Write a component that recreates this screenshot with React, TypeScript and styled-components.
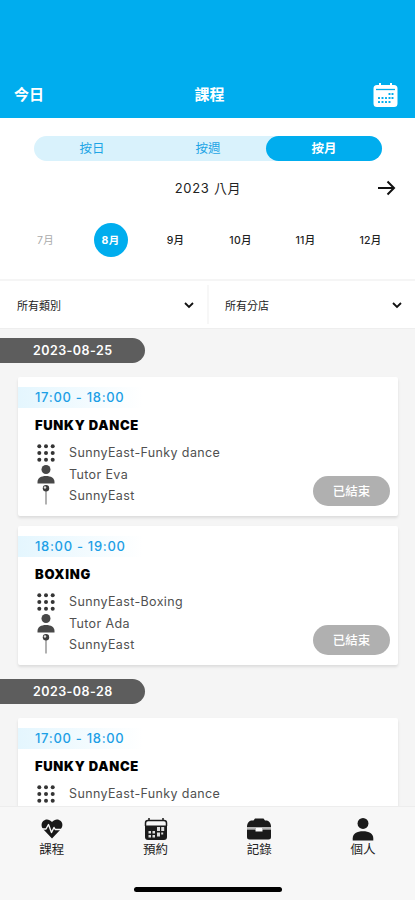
import React from "react";
import styled, { createGlobalStyle } from "styled-components";

const GlobalStyle = createGlobalStyle`
  * { box-sizing: border-box; }
  body { margin: 0; background: #f5f5f5; font-family: Inter, "Noto Sans CJK TC", sans-serif; }
  button { border: 0; padding: 0; background: none; font: inherit; color: inherit; }
  svg { display: block; flex: none; }
`;

const Screen = styled.div`
  width: 415px;
  height: 900px;
  display: flex;
  flex-direction: column;
  overflow: hidden;
  background: #f5f5f5;
  color: #222;
`;

const Header = styled.header`
  height: 118px;
  flex: none;
  padding: 70px 17px 0 14px;
  display: grid;
  grid-template-columns: 60px 1fr 57px;
  align-items: center;
  background: #00adee;
  color: #fff;
  font-size: 15px;
  font-weight: 700;
`;

const HeaderButton = styled.button`
  display: flex;
  justify-content: flex-start;
  padding-bottom: 1px;
  &:last-child { justify-content: flex-end; padding-bottom: 0; padding-top: 2px; }
`;

const HeaderTitle = styled.div`
  text-align: center;
  padding: 0 0 1px 4px;
`;

const Picker = styled.section`
  height: 163px;
  flex: none;
  padding-top: 18px;
  background: #fff;
  border-bottom: 2px solid #f5f5f5;
`;

const Segments = styled.div`
  display: grid;
  grid-template-columns: repeat(3, 1fr);
  width: 348px;
  height: 25px;
  margin-left: 34px;
  border-radius: 13px;
  background: #d9f2fc;
`;

const Segment = styled.button<{ $active?: boolean }>`
  border-radius: 13px;
  font-size: 12.5px;
  line-height: 25px;
  font-weight: ${(p) => (p.$active ? 700 : 400)};
  color: ${(p) => (p.$active ? "#fff" : "#1da5e6")};
  background: ${(p) => (p.$active ? "#00adee" : "transparent")};
`;

const MonthTitle = styled.div`
  display: grid;
  grid-template-columns: 1fr auto 1fr;
  align-items: center;
  height: 24px;
  margin-top: 14px;
  padding-right: 19px;
  padding-left: 20px;
  font-size: 13px;
  letter-spacing: 0.7px;
  svg { justify-self: end; margin-top: 2px; }
`;

const Months = styled.div`
  display: grid;
  grid-template-columns: repeat(6, 65px);
  justify-items: center;
  margin: 24px 0 0 13px;
`;

const Month = styled.button<{ $state?: "past" | "active" }>`
  width: 34px;
  height: 34px;
  padding-bottom: 2px;
  border-radius: 50%;
  font-size: 10.5px;
  letter-spacing: 0.3px;
  white-space: nowrap;
  font-weight: ${(p) => (p.$state === "active" ? 700 : p.$state === "past" ? 400 : 500)};
  color: ${(p) => (p.$state === "active" ? "#fff" : p.$state === "past" ? "#aaa" : "#222")};
  background: ${(p) => (p.$state === "active" ? "#00adee" : "transparent")};
`;

const Filters = styled.div`
  display: grid;
  grid-template-columns: 209px 1fr;
  height: 48px;
  flex: none;
  background: #fff;
  border-bottom: 1px solid #eee;
`;

const Filter = styled.button`
  display: flex;
  align-items: center;
  justify-content: space-between;
  margin: 4px 0;
  padding: 0 13px 0 17px;
  font-size: 11px;
  &:first-child { border-right: 2px solid #f7f7f7; }
  &:last-child { padding: 0 13px 0 16px; }
  svg { margin-top: 2px; }
`;

const Schedule = styled.main`
  flex: 1;
  min-height: 0;
  overflow: hidden;
  padding-top: 9px;
`;

const Day = styled.section`
  margin-bottom: 14px;
`;

const DayLabel = styled.h2`
  width: 145px;
  height: 25px;
  margin: 0 0 14px;
  padding-left: 33px;
  border-radius: 0 13px 13px 0;
  background: #5d5d5d;
  color: #fff;
  font-size: 12.5px;
  line-height: 26px;
  font-weight: 600;
  letter-spacing: 0.45px;
`;

const Card = styled.article`
  display: flex;
  flex-direction: column;
  width: 380px;
  height: 139px;
  margin: 0 0 10px 18px;
  padding-top: 10px;
  background: #fff;
  border-radius: 2px;
  box-shadow: 0 2px 3px rgba(0, 0, 0, 0.1);
`;

const Time = styled.div`
  width: 125px;
  height: 21px;
  padding-left: 17px;
  line-height: 21px;
  font-size: 13px;
  font-weight: 500;
  letter-spacing: 0.7px;
  white-space: nowrap;
  color: #1d9fe6;
  background: linear-gradient(90deg, #e4f6fe, #fff);
`;

const CourseName = styled.h3`
  margin: 7px 0 0 17px;
  font-size: 13px;
  line-height: 20px;
  font-weight: 900;
  letter-spacing: 0.7px;
  color: #000;
`;

const CardBottom = styled.div`
  display: flex;
  justify-content: space-between;
  padding: 7px 8px 0 20px;
`;

const Details = styled.div`
  display: grid;
  grid-auto-rows: 21.4px;
`;

const Detail = styled.div`
  display: grid;
  grid-template-columns: 18px auto;
  column-gap: 13px;
  align-items: center;
  font-size: 12.5px;
  letter-spacing: 0.37px;
  color: #505050;
  svg { margin-left: -1px; }
`;

const Status = styled.span`
  align-self: flex-start;
  width: 77px;
  height: 30px;
  margin-top: 34px;
  border-radius: 15px;
  background: #b0b0b0;
  color: #fff;
  font-size: 12.5px;
  font-weight: 500;
  line-height: 31px;
  text-align: center;
`;

const TabBar = styled.nav`
  display: grid;
  grid-template-columns: repeat(4, 103.7px);
  grid-template-rows: 80px 6px;
  height: 94px;
  flex: none;
  background: #f7f7f7;
  border-top: 1px solid #ededed;
`;

const Tab = styled.button`
  display: grid;
  grid-template-rows: 23px 18px;
  align-content: start;
  justify-items: center;
  padding-top: 11px;
  font-size: 12.5px;
  line-height: 18px;
`;

const HomeIndicator = styled.div`
  grid-column: 1 / -1;
  width: 148px;
  height: 5px;
  margin-left: 134px;
  border-radius: 3px;
  background: #000;
`;

const HeaderCalendar = () => (
  <svg width="25" height="25" viewBox="0 0 25 25">
    <path fill="#fff" d="M4 2h2V0h2v2h9V0h2v2h2q3.500 0 3.500 3.500V20.500q0 3.500-3.500 3.500H4Q.5 24 .5 20.500V5.500Q.5 2 4 2Z" />
    <path stroke="#00adee" strokeWidth="1.300" d="M3 6.500h19" />
    <g fill="#00adee">
      {[10, 14, 18].map((y, row) =>
        [5, 8.5, 12, 15.5, 18.5].map((x, col) =>
          (row === 0 && col < 3) || (row === 2 && col > 3) ? null : (
            <rect key={`${x}-${y}`} x={x} y={y} width="2" height="2" rx=".5" />
          )
        )
      )}
    </g>
  </svg>
);

const Arrow = () => (
  <svg width="18" height="16" viewBox="0 0 18 16" fill="none" stroke="#111" strokeWidth="2">
    <path d="M0 8h16M9.500 1.500 16 8l-6.500 6.500" />
  </svg>
);

const Chevron = () => (
  <svg width="10" height="7" viewBox="0 0 10 7" fill="none" stroke="#111" strokeWidth="1.800">
    <path d="m1 1 4 4 4-4" />
  </svg>
);

const Dots = () => (
  <svg width="18" height="18" viewBox="0 0 18 18" fill="#353535">
    {[2.3, 9, 15.7].map((y) => [2.3, 9, 15.7].map((x) => <circle key={`${x}-${y}`} cx={x} cy={y} r="2" />))}
  </svg>
);

const Person = ({ color = "#484848", width = 18, height = 19 }) => (
  <svg width={width} height={height} viewBox="0 0 18 19" fill={color}>
    <circle cx="9" cy="4.500" r="4.500" />
    <path d="M.5 18.500v-1.500c0-4 3.500-6 8.500-6s8.500 2 8.500 6v1.500Z" />
  </svg>
);

const Pin = () => (
  <svg width="18" height="20" viewBox="0 0 18 20">
    <path stroke="#888" strokeWidth="1.300" d="M9 5v14.500" />
    <circle cx="9" cy="3.300" r="3.200" fill="#3c3c3c" />
    <circle cx="8" cy="2.500" r="1.200" fill="#ddd" />
  </svg>
);

const HeartPulse = () => (
  <svg width="24" height="22" viewBox="0 0 24 22">
    <path fill="#181818" d="M12 4C9.500.8 5.500.6 3.200 3 .8 5.600 1.200 9 3.500 11.500L12 20.500l8.500-9C22.800 9 23.200 5.600 20.800 3 18.500.6 14.500.8 12 4Z" />
    <path fill="none" stroke="#f7f7f7" strokeWidth="1.400" strokeLinejoin="round" d="M0 11h6l2.500-4.500 3 8 2.500-5 1.200 2H24" />
  </svg>
);

const BookingCalendar = () => (
  <svg width="24" height="23" viewBox="0 0 24 23">
    <path fill="none" stroke="#1b1b1b" strokeWidth="1.500" d="M5 0v3M19 0v3M1.500 8V5q0-2.500 2.500-2.500h16q2.500 0 2.500 2.500v3" />
    <path fill="#1b1b1b" d="M1 7.500h22V19q0 3-3 3H4q-3 0-3-3Z" />
    <g fill="#ddd">
      <path d="M13 9h3v4h-3zM17.200 9h3v4h-3zM4.500 13h2.500v2.500H4.500zM8.500 13H11v2.500H8.500zM4.500 17h2.500v2.500H4.500zM8.500 17H11v2.500H8.500zM13 14.500h3v4h-3zM17.200 14.500h2v2h-2z" />
    </g>
  </svg>
);

const Briefcase = () => (
  <svg width="24" height="22" viewBox="0 0 24 22">
    <path fill="#1b1b1b" d="M6.500 2.500 8 .5h8.500L18 2.500h2q3.500 1 4 5.500v1H0V8q.5-4.500 4-5.500Z" />
    <path fill="#1b1b1b" d="M0 11.500h8.500v2h7v-2H24V19q0 2.500-2.500 2.500h-19Q0 21.500 0 19Z" />
    <path fill="#b5b5b5" d="M0 9h24v2H0z" />
    <path fill="#fff" d="M9 10h6v3H9z" />
  </svg>
);

const months: { label: string; state?: "past" | "active" }[] = [
  { label: "7月", state: "past" },
  { label: "8月", state: "active" },
  { label: "9月" },
  { label: "10月" },
  { label: "11月" },
  { label: "12月" },
];

const funky = { time: "17:00 - 18:00", name: "FUNKY DANCE", room: "SunnyEast-Funky dance", tutor: "Tutor Eva" };
const boxing = { time: "18:00 - 19:00", name: "BOXING", room: "SunnyEast-Boxing", tutor: "Tutor Ada" };
const days = [
  { date: "2023-08-25", courses: [funky, boxing] },
  { date: "2023-08-28", courses: [funky] },
];

const CourseCard = ({ course }: { course: typeof funky }) => (
  <Card>
    <Time>{course.time}</Time>
    <CourseName>{course.name}</CourseName>
    <CardBottom>
      <Details>
        <Detail><Dots />{course.room}</Detail>
        <Detail><Person />{course.tutor}</Detail>
        <Detail><Pin />SunnyEast</Detail>
      </Details>
      <Status>已結束</Status>
    </CardBottom>
  </Card>
);

export default function App() {
  return (
    <>
      <GlobalStyle />
      <Screen lang="zh-Hant">
        <Header>
          <HeaderButton>今日</HeaderButton>
          <HeaderTitle>課程</HeaderTitle>
          <HeaderButton><HeaderCalendar /></HeaderButton>
        </Header>
        <Picker>
          <Segments>
            <Segment>按日</Segment>
            <Segment>按週</Segment>
            <Segment $active>按月</Segment>
          </Segments>
          <MonthTitle><span /><span>2023 八月</span><Arrow /></MonthTitle>
          <Months>
            {months.map((m) => <Month key={m.label} $state={m.state}>{m.label}</Month>)}
          </Months>
        </Picker>
        <Filters>
          <Filter>所有類別<Chevron /></Filter>
          <Filter>所有分店<Chevron /></Filter>
        </Filters>
        <Schedule>
          {days.map((day) => (
            <Day key={day.date}>
              <DayLabel>{day.date}</DayLabel>
              {day.courses.map((c) => <CourseCard key={c.time} course={c} />)}
            </Day>
          ))}
        </Schedule>
        <TabBar>
          <Tab><HeartPulse />課程</Tab>
          <Tab><BookingCalendar />預約</Tab>
          <Tab><Briefcase />記錄</Tab>
          <Tab><Person color="#1b1b1b" width={22} height={23} />個人</Tab>
          <HomeIndicator />
        </TabBar>
      </Screen>
    </>
  );
}
